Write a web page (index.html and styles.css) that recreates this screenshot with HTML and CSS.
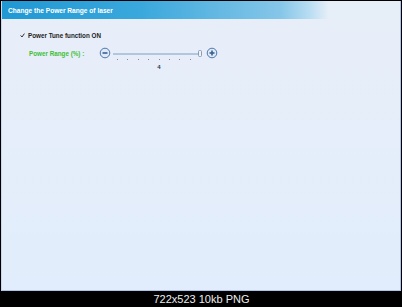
FILE: index.html
```html
<!DOCTYPE html>
<html lang="en">
  <head>
    <meta charset="UTF-8" />
    <meta name="viewport" content="width=device-width, initial-scale=1.0" />
    <title>Power Range</title>

    <link rel="stylesheet" href="styles.css">
  </head>
  <body>
    <div class="shot">
      <div class="window">
        <div class="title-bar">Change the Power Range of laser</div>

        <div class="content">
          <label class="check-row">
            <span class="check">
              <svg width="5" height="5" viewBox="0 0 5 5">
                <path d="M0.6 2.4 L2 4 L4.4 0.6" fill="none" stroke="#333" stroke-width="1" />
              </svg>
            </span>
            Power Tune function ON
          </label>

          <div class="range-row">
            <span class="range-label">Power Range (%) :</span>
            <div class="slider">
              <svg width="120" height="14" viewBox="0 0 120 14">
                <circle cx="6" cy="6" r="4.8" fill="#dfe9f6" stroke="#4d78b0" stroke-width="1" />
                <rect x="3.5" y="5.2" width="5" height="1.6" fill="#3a5f94" />
                <line x1="14" y1="7" x2="99" y2="7" stroke="#7f9cc4" stroke-width="1" />
                <rect x="99.5" y="3.5" width="3" height="6" rx="1" fill="#eef2f8" stroke="#8a9bb3" />
                <circle cx="113" cy="6" r="4.8" fill="#dfe9f6" stroke="#4d78b0" stroke-width="1" />
                <rect x="110.5" y="5.2" width="5" height="1.6" fill="#3a5f94" />
                <rect x="112.2" y="3.5" width="1.6" height="5" fill="#3a5f94" />
                <g fill="#7d8ca3">
                  <rect x="18" y="12" width="1" height="1" />
                  <rect x="28" y="12" width="1" height="1" />
                  <rect x="39" y="12" width="1" height="1" />
                  <rect x="49" y="12" width="1" height="1" />
                  <rect x="60" y="12" width="1" height="1" />
                  <rect x="70" y="12" width="1" height="1" />
                  <rect x="80" y="12" width="1" height="1" />
                  <rect x="91" y="12" width="1" height="1" />
                </g>
              </svg>
              <div class="slider-value">4</div>
            </div>
          </div>
        </div>
      </div>
      <div class="caption">722x523 10kb PNG</div>
    </div>
  </body>
</html>
```

FILE: styles.css
```css
body {
  margin: 0;
  background-color: #000;
  font-family: "Liberation Sans", Arial, sans-serif;
}

.shot {
  width: 402px;
  height: 307px;
  padding: 1px 0 0 1px;
  box-sizing: border-box;
  background-color: #000;
}

.window {
  width: 400px;
  height: 290px;
  box-sizing: border-box;
  border: 1px solid #a9c3ea;
  border-top: none;
  border-left-color: #c9d8ee;
  background: linear-gradient(#e8eef8, #e1edfc);
}

.title-bar {
  height: 18px;
  padding-left: 6px;
  display: flex;
  align-items: center;
  color: #fff;
  font-size: 6.6px;
  font-weight: bold;
  background: linear-gradient(90deg, #1f98d4 0%, #3aa8dc 35%, #86c6e8 70%, #b6dcf2 77%, #e6eef8 82%);
}

.content {
  padding: 12px 0 0 18px;
}

.check-row {
  display: flex;
  align-items: center;
  gap: 3px;
  height: 8px;
  color: #222;
  font-size: 6.3px;
  font-weight: bold;
}

.check {
  width: 5px;
  height: 5px;
  display: flex;
}

.range-row {
  display: flex;
  align-items: flex-start;
  margin-top: 8px;
  padding-left: 9px;
}

.range-label {
  width: 70px;
  line-height: 14px;
  color: #3fbf35;
  font-size: 6.3px;
  font-weight: bold;
}

.slider {
  display: flex;
  flex-direction: column;
  align-items: center;
  width: 120px;
}

.slider svg {
  display: block;
}

.slider-value {
  margin-top: 3px;
  color: #2a3a50;
  font-size: 6px;
  font-weight: bold;
}

.caption {
  height: 16px;
  display: flex;
  align-items: center;
  justify-content: center;
  color: #eee;
  font-size: 11px;
}
```
